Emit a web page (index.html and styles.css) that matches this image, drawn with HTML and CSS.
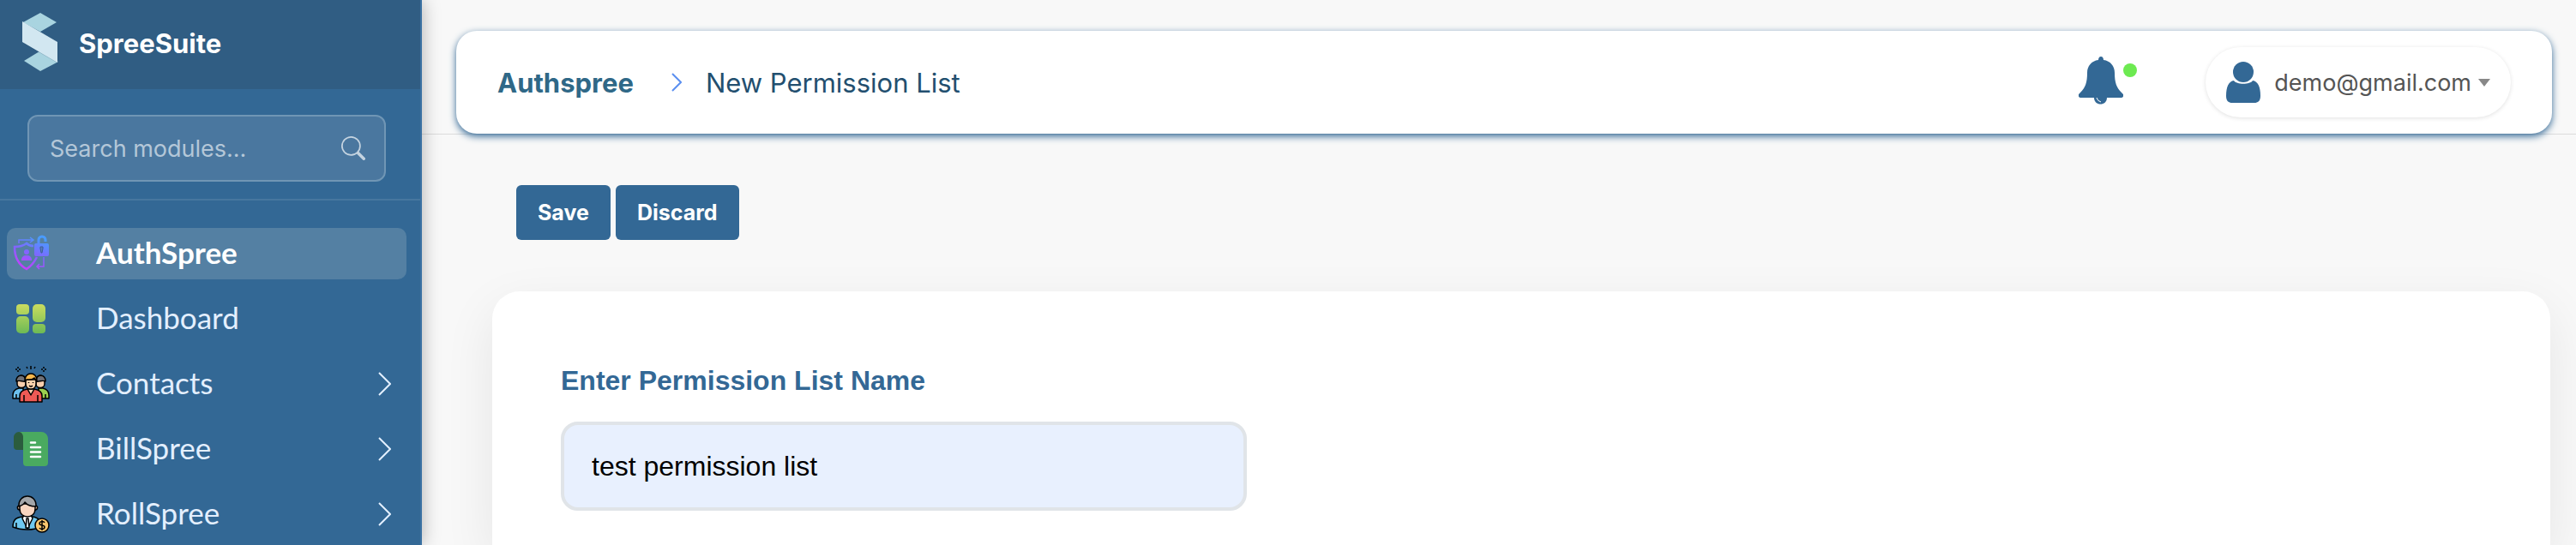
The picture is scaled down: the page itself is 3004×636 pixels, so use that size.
FILE: index.html
```
<!DOCTYPE html>
<html lang="en">
<head>
<meta charset="UTF-8" />
<meta name="viewport" content="width=device-width, initial-scale=1" />
<title>New Permission List - Authspree</title>
<link rel="stylesheet" href="styles.css">
</head>
<body>
<aside class="sidebar">
    <div class="brand">
        <svg class="brand-logo" viewBox="0 0 46 70">
            <path d="M1 11 21 0l19 11-19 11z" fill="#a9d4e0"/>
            <path d="M2 56 20 45l22 12-21 11z" fill="#a9d4e0"/>
            <path d="M2 12 42 35v24L2 36z" fill="#1f4a6b" opacity=".3"/>
            <path d="M0 10 41 34v24L0 34z" fill="#d2e7f1"/>
        </svg>
        <span class="brand-name">SpreeSuite</span>
    </div>
    <div class="search">
        <div class="search-box">
            <input type="text" id="search" placeholder="Search modules..." aria-label="Search modules">
            <svg class="search-icon" viewBox="0 0 16 16" fill="currentColor"><path d="M11.742 10.344a6.5 6.5 0 1 0-1.397 1.398h-.001q.044.06.098.115l3.85 3.85a1 1 0 0 0 1.415-1.414l-3.85-3.85a1 1 0 0 0-.115-.1zM12 6.5a5.5 5.5 0 1 1-11 0 5.5 5.5 0 0 1 11 0"/></svg>
        </div>
    </div>
    <nav class="menu">
        <a class="item active" href="#">
            <svg class="item-icon" viewBox="0 0 44 44" fill="none">
                <defs>
                    <linearGradient id="auth" gradientUnits="userSpaceOnUse" x1="32" y1="4" x2="16" y2="40">
                        <stop offset="0" stop-color="#4a9bff"/><stop offset=".5" stop-color="#7f66ff"/><stop offset="1" stop-color="#c43fff"/>
                    </linearGradient>
                </defs>
                <g stroke="url(#auth)">
                    <path d="M8 10V6h17M21 3l4 3-4 3" stroke-width="1.5"/>
                    <path d="M25 13c-4 0-6-1-8-3-4 3-8 4-14 4 0 11 3 20 14 26 6-4 9-8 12-14" stroke-width="2.5"/>
                    <path d="M37 26v11h-8M32 34l-3 3 3 3" stroke-width="1.5"/>
                    <path d="M31 11V6a4 4 0 0 1 8 0v2" stroke-width="3"/>
                </g>
                <circle cx="17" cy="20" r="3" fill="url(#auth)"/>
                <path d="M11 30c0-5 3-6 6-6s6 1 6 6z" fill="url(#auth)"/>
                <rect x="26" y="10" width="17" height="15" rx="2" fill="url(#auth)"/>
                <path d="M33 14h3v2l-1 5h-1l-1-5z" stroke="#3a5f95" fill="#5a7cc0"/>
            </svg>
            <span>AuthSpree</span>
        </a>
        <a class="item" href="#">
            <svg class="item-icon" viewBox="0 0 44 44">
                <defs>
                    <linearGradient id="dash" gradientUnits="userSpaceOnUse" x1="0" y1="5" x2="0" y2="39">
                        <stop offset="0" stop-color="#cbdc5f"/><stop offset="1" stop-color="#6dba55"/>
                    </linearGradient>
                </defs>
                <g fill="url(#dash)">
                    <rect x="5" y="5" width="15" height="12" rx="4"/>
                    <rect x="5" y="19" width="15" height="20" rx="5"/>
                    <rect x="24" y="5" width="15" height="21" rx="5"/>
                    <rect x="24" y="28" width="15" height="11" rx="4"/>
                </g>
            </svg>
            <span>Dashboard</span>
        </a>
        <a class="item" href="#">
            <svg class="item-icon" viewBox="0 0 44 44" stroke="#000" stroke-width="1.5" stroke-linejoin="round">
                <path d="M22 1v4M17 2l1 2M27 2l-1 2M7 2v2M7 6v2M4 5h2M8 5h2M37 2v2M37 6v2M34 5h2M38 5h2" fill="none"/>
                <path d="M1 39v-4c0-5 3-7 7-8h5v12z" fill="#6cc0ee"/>
                <path d="M43 39v-4c0-5-3-7-7-8h-5v12z" fill="#9bd04f"/>
                <path d="M6 18c0-8 10-8 10 0v4c0 6-10 6-10 0z" fill="#f8cfae"/>
                <path d="M5 19c-1-9 12-9 11 0-4 1-7-2-11 0z" fill="#6f7077"/>
                <path d="M28 18c0-8 10-8 10 0v4c0 6-10 6-10 0z" fill="#f8cfae"/>
                <path d="M28 19c-1-9 12-9 11 0-4-2-7 1-11 0z" fill="#6f7077"/>
                <path d="M5 34v5M39 34v5"/>
                <path d="M9 43v-7c0-5 3-7 9-8h8c6 1 9 3 9 8v7z" fill="#ef5a55"/>
                <path d="m18 28 4 7 4-7z" fill="#f8cfae"/>
                <path d="M14 35v8M30 35v8"/>
                <path d="M16 17h12v5c0 8-12 8-12 0z" fill="#fcd3ad"/>
                <path d="M15 19c-1-12 15-12 14 0l-3-4c-3 3-7 2-9 2z" fill="#f7b84e"/>
                <path d="M19.5 20v1M24.5 20v1M20 24q2 2 4 0" fill="none"/>
            </svg>
            <span>Contacts</span>
            <svg class="arrow" viewBox="0 0 16 28"><path d="m2 1 13 13L2 27"/></svg>
        </a>
        <a class="item" href="#">
            <svg class="item-icon" viewBox="0 0 44 44">
                <path d="M8 2h26a8 8 0 0 1 8 8v28a4 4 0 0 1-4 4H17a4 4 0 0 1-4-4V23z" fill="#4aaa60"/>
                <path d="M8 2c3 0 5 3 5 6v15H6a4 4 0 0 1-4-4V8c0-3 3-6 6-6z" fill="#2b5c3e"/>
                <path d="M22 14.5h5M22 20h11M22 25.5h11M22 31h11" stroke="#fff" stroke-width="2.5" stroke-linecap="round"/>
            </svg>
            <span>BillSpree</span>
            <svg class="arrow" viewBox="0 0 16 28"><path d="m2 1 13 13L2 27"/></svg>
        </a>
        <a class="item" href="#">
            <svg class="item-icon" viewBox="0 0 44 44" stroke="#000" stroke-width="1.5" stroke-linejoin="round">
                <path d="M1 37c0-8 3-11 11-12h12c8 1 9 5 9 12-8 4-22 4-32 0z" fill="#6fc8f0"/>
                <path d="m14 23-2 4 6 12 6-12-2-4z" fill="#fff"/>
                <path d="m17 27-1 11h4l-1-11z" fill="#dce6ee"/>
                <path d="M5 32v6" fill="none"/>
                <path d="M9 12c-4 0-3 5 0 5M27 12c4 0 3 5 0 5" fill="#f6cdb4"/>
                <path d="M9 10h18v6c0 12-18 12-18 0z" fill="#f8d5c0"/>
                <path d="M8 13C7-3 29-3 28 13c-5 0-10-1-13-5-1 3-4 4-7 5z" fill="#a3a5a8"/>
                <circle cx="35" cy="35" r="8" fill="#fbc66f"/>
                <path d="M38 32c-1-2-6-2-6 1s6 1 6 4-5 3-6 1M35 29v12" fill="none"/>
            </svg>
            <span>RollSpree</span>
            <svg class="arrow" viewBox="0 0 16 28"><path d="m2 1 13 13L2 27"/></svg>
        </a>
    </nav>
</aside>

<main class="page">
    <header class="topbar">
        <div class="topbar-card">
            <nav class="crumbs">
                <a class="crumb-root" href="#">Authspree</a>
                <svg class="crumb-arrow" viewBox="0 0 12 22"><path d="m1 1 10 10L1 21"/></svg>
                <span>New Permission List</span>
            </nav>
            <div class="tools">
                <button type="button" class="bell" aria-label="Notifications">
                    <svg viewBox="0 0 52 56">
                        <path d="M26 0c2 0 3 2 3 4 8 1 13 7 13 15 0 11 2 17 8 23 4 3 2 6-1 6H3c-3 0-5-3-1-6 6-6 8-12 8-23 0-8 5-14 13-15 0-2 1-4 3-4z"/>
                        <path d="M18 48h15c0 10-15 10-15 0z"/>
                        <path d="M21 48q1 4 5 5" fill="none" stroke="#fff" stroke-width="1"/>
                    </svg>
                    <i class="dot"></i>
                </button>
                <button type="button" class="user">
                    <svg class="user-icon" viewBox="0 0 40 48">
                        <ellipse cx="20" cy="12" rx="12" ry="12"/>
                        <path d="M9 22c3 5 19 5 22 0 6 1 9 7 9 18 0 6-3 8-7 8H7c-4 0-7-2-7-8 0-11 3-17 9-18z"/>
                    </svg>
                    <span>demo@gmail.com</span>
                    <i class="caret"></i>
                </button>
            </div>
        </div>
    </header>

    <div class="actions">
        <button type="button" class="btn">Save</button>
        <button type="button" class="btn">Discard</button>
    </div>

    <form class="panel">
        <label for="listName">Enter Permission List Name</label>
        <input type="text" id="listName" value="test permission list">
    </form>
</main>
</body>
</html>
```

FILE: styles.css
```
*{
    box-sizing: border-box;
}
body{
    margin: 0;
    display: flex;
    min-height: 100vh;
    background-color: #f8f8f8;
    font-family: Inter, "Liberation Sans", sans-serif;
    font-size: 31px;
}
button, input{
    font-family: inherit;
    font-size: inherit;
}
a{
    text-decoration: none;
}

/* sidebar */
.sidebar{
    flex: none;
    width: 492px;
    background-color: #336895;
    border-right: 2px solid #3b72a3;
    box-shadow: 0 0 20px rgba(0, 0, 0, 0.3);
    color: #fff;
    z-index: 1;
}
.brand{
    display: flex;
    align-items: center;
    gap: 20px;
    height: 104px;
    padding: 0 26px 4px;
    background-color: #305d83;
}
.brand-logo{
    width: 46px;
    height: 70px;
}
.brand-name{
    font-size: 31px;
    font-weight: bold;
}
.search{
    padding: 30px 40px 20px 32px;
    border-bottom: 2px solid #47779f;
}
.search-box{
    display: flex;
    align-items: center;
    height: 78px;
    padding: 0 22px 0 24px;
    border: 2px solid #7096b5;
    border-radius: 12px;
    background-color: #4a779f;
}
.search-box input{
    flex: 1;
    min-width: 0;
    padding: 0;
    border: none;
    outline: none;
    background: none;
    color: #fff;
    font-size: 27px;
}
.search-box input::placeholder{
    color: #b4c7d8;
}
.search-icon{
    width: 28px;
    height: 28px;
    color: #c4d3e0;
}
.menu{
    display: flex;
    flex-direction: column;
    gap: 16px;
    padding: 32px 16px 0 8px;
}
.item{
    display: flex;
    align-items: center;
    height: 60px;
    padding: 0 18px 0 6px;
    border-radius: 10px;
    color: #e3efff;
    font-family: Lato, "Liberation Sans", sans-serif;
    font-size: 35px;
}
.item span{
    padding-bottom: 4px;
}
.item.active{
    background-color: #5480a3;
    color: #fff;
    font-weight: bold;
}
.item-icon{
    width: 44px;
    height: 44px;
    margin-right: 54px;
}
.arrow{
    width: 16px;
    height: 28px;
    margin-left: auto;
    fill: none;
    stroke: #e3efff;
    stroke-width: 2;
}

/* top bar */
.page{
    flex: 1;
    min-width: 0;
    display: flex;
    flex-direction: column;
}
.topbar{
    padding: 36px 28px 0 40px;
    border-bottom: 1px solid #dcdcdc;
}
.topbar-card{
    display: flex;
    align-items: center;
    justify-content: space-between;
    height: 120px;
    padding: 0 48px;
    border-radius: 24px;
    background-color: #fff;
    box-shadow: 0 3px 9px #336895;
}
.crumbs{
    display: flex;
    align-items: center;
    color: #234f6f;
}
.crumb-root{
    color: #2f6887;
    font-weight: bold;
}
.crumb-arrow{
    width: 12px;
    height: 22px;
    margin: 0 28px 0 44px;
    fill: none;
    stroke: #5b8ff0;
    stroke-width: 2;
}
.tools{
    display: flex;
    align-items: center;
    gap: 80px;
}
.bell{
    display: flex;
    padding: 0 0 4px;
    border: none;
    background: none;
}
.bell svg{
    width: 52px;
    height: 56px;
    fill: #336895;
}
.dot{
    width: 16px;
    height: 16px;
    margin-top: 8px;
    border-radius: 50%;
    background-color: #6dea51;
}
.user{
    display: flex;
    align-items: center;
    height: 82px;
    padding: 0 24px;
    border: none;
    border-radius: 41px;
    background-color: #fff;
    box-shadow: 0 1px 5px rgba(0, 0, 0, 0.12);
    color: #555;
    font-size: 27px;
}
.user-icon{
    width: 40px;
    height: 48px;
    margin-right: 16px;
    fill: #336895;
}
.caret{
    margin-left: 8px;
    border: 7px solid transparent;
    border-top: 9px solid #888;
    border-bottom: none;
}

/* content */
.actions{
    display: flex;
    gap: 6px;
    padding: 59px 0 60px 110px;
}
.btn{
    height: 64px;
    padding: 0 25px;
    border: none;
    border-radius: 6px;
    background-color: #336895;
    color: #fff;
    font-size: 25px;
    font-weight: bold;
}
.panel{
    flex: 1;
    margin: 0 30px 0 82px;
    padding: 80px 80px 40px;
    border-radius: 32px 32px 0 0;
    background-color: #fff;
    box-shadow: 0 20px 60px rgba(0, 0, 0, 0.08);
    font-family: "Liberation Sans", sans-serif;
    font-size: 32px;
}
.panel label{
    display: block;
    margin-bottom: 24px;
    color: #336895;
    font-weight: bold;
    line-height: 48px;
}
.panel input{
    display: block;
    width: 800px;
    max-width: 100%;
    height: 104px;
    padding: 0 32px;
    border: 4px solid #e0e4e8;
    border-radius: 20px;
    background-color: #e8f0fe;
    color: #000;
}
```
